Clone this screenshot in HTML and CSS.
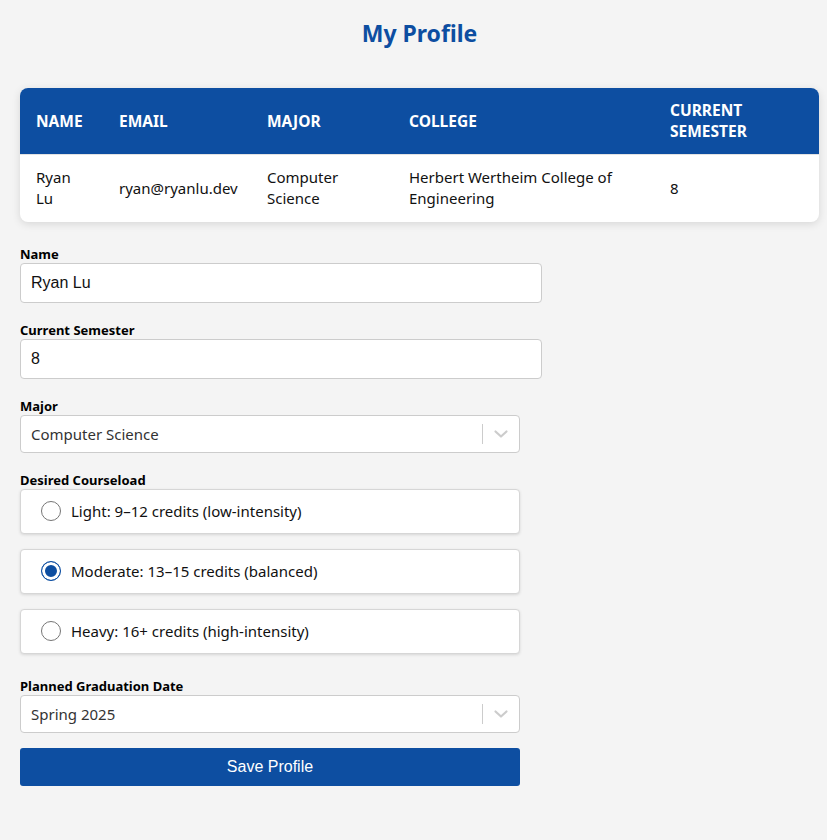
FILE: index.html
```html
<!DOCTYPE html>
<html lang="en">
<head>
<meta charset="utf-8">
<title>My Profile</title>
<link rel="stylesheet" href="styles.css">
</head>
<body>
<div class="page">
  <h1 class="title">My Profile</h1>
  <div class="table-card">
    <table class="profile-table">
      <colgroup>
        <col class="c-name"><col class="c-email"><col class="c-major"><col class="c-college"><col class="c-sem">
      </colgroup>
      <thead>
        <tr><th>Name</th><th>Email</th><th>Major</th><th>College</th><th>Current Semester</th></tr>
      </thead>
      <tbody>
        <tr><td>Ryan Lu</td><td>ryan@ryanlu.dev</td><td>Computer Science</td><td>Herbert Wertheim College of Engineering</td><td>8</td></tr>
      </tbody>
    </table>
  </div>

  <form class="form">
    <div class="field">
      <label class="label">Name</label>
      <input class="text-input wide" type="text" value="Ryan Lu">
    </div>
    <div class="field">
      <label class="label">Current Semester</label>
      <input class="text-input wide" type="text" value="8">
    </div>
    <div class="field">
      <label class="label">Major</label>
      <div class="select">
        <span class="select-value">Computer Science</span>
        <span class="select-sep"></span>
        <svg class="chevron" width="20" height="20" viewBox="0 0 20 20"><path d="M4.5 7.5 L10 12.5 L15.5 7.5" fill="none" stroke="#cccccc" stroke-width="2.2" stroke-linecap="round" stroke-linejoin="round"/></svg>
      </div>
    </div>
    <div class="field field-radios">
      <label class="label">Desired Courseload</label>
      <label class="radio-card"><input class="radio" type="radio" name="load"><span>Light: 9–12 credits (low-intensity)</span></label>
      <label class="radio-card"><input class="radio" type="radio" name="load" checked><span>Moderate: 13–15 credits (balanced)</span></label>
      <label class="radio-card"><input class="radio" type="radio" name="load"><span>Heavy: 16+ credits (high-intensity)</span></label>
    </div>
    <div class="field field-last">
      <label class="label">Planned Graduation Date</label>
      <div class="select">
        <span class="select-value">Spring 2025</span>
        <span class="select-sep"></span>
        <svg class="chevron" width="20" height="20" viewBox="0 0 20 20"><path d="M4.5 7.5 L10 12.5 L15.5 7.5" fill="none" stroke="#cccccc" stroke-width="2.2" stroke-linecap="round" stroke-linejoin="round"/></svg>
      </div>
    </div>
    <button class="save-btn" type="button">Save Profile</button>
  </form>
</div>
</body>
</html>
```

FILE: styles.css
```css
* { box-sizing: border-box; }
html, body { margin: 0; padding: 0; background: #f4f4f4; }
body { font-family: "Noto Sans", "Open Sans", sans-serif; color: #111; }

.page { width: 827px; padding: 0 8px 40px 20px; }

.title {
  margin: 0;
  padding-top: 17px;
  height: 88px;
  text-align: center;
  font-size: 23px;
  line-height: 32px;
  font-weight: 700;
  color: #0d4ea1;
}

.table-card {
  width: 799px;
  background: #fff;
  border-radius: 8px;
  overflow: hidden;
  box-shadow: 0 2px 8px rgba(0,0,0,0.12);
}
.profile-table { width: 100%; border-collapse: collapse; table-layout: fixed; }
.c-name { width: 83px; }
.c-email { width: 148px; }
.c-major { width: 142px; }
.c-college { width: 261px; }
.c-sem { width: 165px; }
.profile-table th {
  background: #0d4ea1;
  color: #fff;
  text-align: left;
  text-transform: uppercase;
  font-size: 15.5px;
  font-weight: 700;
  line-height: 21px;
  padding: 12px 16px;
  height: 66px;
}
.profile-table td {
  font-size: 15px;
  line-height: 21px;
  padding: 12px 16px;
  border-top: 1px solid #e2e2e2;
  color: #111;
  height: 67px;
}

.form { width: 522px; padding-top: 24px; }
.field { margin-bottom: 19px; }
.field-radios { margin-bottom: 24px; }
.field-last { margin-bottom: 15px; }
.label {
  display: block;
  font-size: 13px;
  font-weight: 700;
  line-height: 17px;
  color: #000;
}
.text-input {
  display: block;
  width: 522px;
  height: 40px;
  border: 1px solid #cccccc;
  border-radius: 4px;
  background: #fff;
  padding: 0 10px;
  font-family: "Liberation Sans", Arial, sans-serif;
  font-size: 16px;
  color: #111;
}

.select {
  display: flex;
  align-items: center;
  width: 500px;
  height: 38px;
  border: 1px solid #cccccc;
  border-radius: 4px;
  background: #fff;
  padding-left: 10px;
}
.select-value { flex: 1; font-size: 15px; color: #333; }
.select-sep { width: 1px; height: 20px; background: #cccccc; }
.chevron { margin: 0 8px 0 8px; }

.radio-card {
  display: flex;
  align-items: center;
  width: 500px;
  height: 45px;
  background: #fff;
  border: 1px solid #d6d6d6;
  border-radius: 4px;
  box-shadow: 0 1px 3px rgba(0,0,0,0.12);
  padding-left: 20px;
  margin-bottom: 15px;
  font-size: 15px;
  color: #111;
}
.radio-card:last-child { margin-bottom: 0; }
.radio {
  appearance: none;
  -webkit-appearance: none;
  width: 20px;
  height: 20px;
  margin: 0 10px 0 0;
  border: 1px solid #767676;
  border-radius: 50%;
  background: #fff;
}
.radio:checked {
  border: 1.5px solid #0d4ea1;
  background: #0d4ea1;
  box-shadow: inset 0 0 0 3px #fff;
}

.save-btn {
  display: block;
  width: 500px;
  height: 38px;
  border: none;
  border-radius: 3px;
  background: #0d4ea1;
  color: #fff;
  font-family: "Liberation Sans", Arial, sans-serif;
  font-size: 16px;
}
```
